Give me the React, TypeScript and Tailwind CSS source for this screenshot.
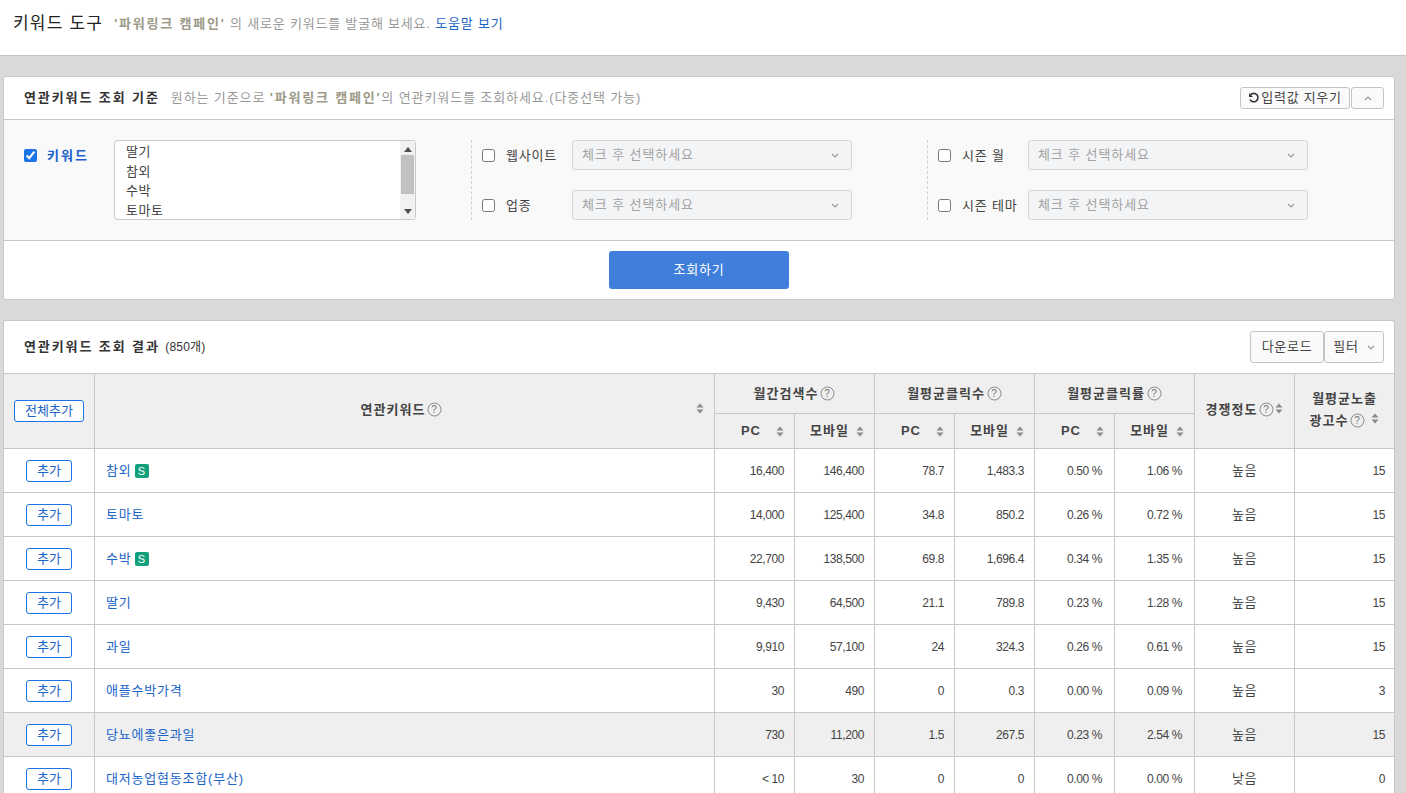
import React from "react";

const font = "font-['Liberation_Sans','Noto_Sans_CJK_KR',sans-serif]";

const rows = [
  { name: "참외", s: true, v: ["16,400", "146,400", "78.7", "1,483.3", "0.50 %", "1.06 %", "높음", "15"] },
  { name: "토마토", v: ["14,000", "125,400", "34.8", "850.2", "0.26 %", "0.72 %", "높음", "15"] },
  { name: "수박", s: true, v: ["22,700", "138,500", "69.8", "1,696.4", "0.34 %", "1.35 %", "높음", "15"] },
  { name: "딸기", v: ["9,430", "64,500", "21.1", "789.8", "0.23 %", "1.28 %", "높음", "15"] },
  { name: "과일", v: ["9,910", "57,100", "24", "324.3", "0.26 %", "0.61 %", "높음", "15"] },
  { name: "애플수박가격", v: ["30", "490", "0", "0.3", "0.00 %", "0.09 %", "높음", "3"] },
  { name: "당뇨에좋은과일", hover: true, v: ["730", "11,200", "1.5", "267.5", "0.23 %", "2.54 %", "높음", "15"] },
  { name: "대저농업협동조합(부산)", v: ["< 10", "30", "0", "0", "0.00 %", "0.00 %", "낮음", "0"] },
];

const Sort = ({ className = "" }: { className?: string }) => (
  <svg width="8" height="11" viewBox="0 0 8 11" className={`shrink-0 ${className}`}>
    <path d="M4 0.5L7.5 4.5H0.5z" fill="#8a8a8a" />
    <path d="M4 10.5L7.5 6.5H0.5z" fill="#8a8a8a" />
  </svg>
);

const Help = () => (
  <svg width="15" height="15" viewBox="0 0 15 15" className="ml-[2px] inline-block shrink-0 align-[-3px]">
    <circle cx="7.5" cy="7.5" r="6.5" fill="none" stroke="#8c8c8c" />
    <text x="7.5" y="11" textAnchor="middle" fontSize="10" fontWeight="400" fill="#777">?</text>
  </svg>
);

const Chevron = ({ up }: { up?: boolean }) => (
  <svg width="8" height="5" viewBox="0 0 8 5">
    <path d={up ? "M1 4l3-3 3 3" : "M1 1l3 3 3-3"} fill="none" stroke="#999" strokeWidth="1.2" />
  </svg>
);

const Select = () => (
  <div className="flex h-[30px] w-[280px] items-center justify-between rounded-[3px] border border-[#d5d7da] bg-[#f3f4f6] pl-[9px] pr-[12px] text-[13px] tracking-[0.9px] text-[#a3a3a3]">
    <span>체크 후 선택하세요</span>
    <Chevron />
  </div>
);

const Check = ({ on }: { on?: boolean }) => (
  <input type="checkbox" defaultChecked={on} className="m-0 h-[13px] w-[13px] shrink-0 accent-[#1a73e8]" />
);

const Field = ({ label }: { label: string }) => (
  <div className="flex h-[30px] items-center">
    <Check />
    <span className="ml-[11px] w-[66px] pt-[1px] text-[13px] tracking-[0.8px] text-[#444]">{label}</span>
    <Select />
  </div>
);

const Btn = ({ children, className = "" }: { children: React.ReactNode; className?: string }) => (
  <button className={`flex items-center justify-center rounded-[3px] border border-[#c4c4c4] bg-[#fafafa] text-[13px] tracking-[0.7px] text-[#444] ${className}`}>
    {children}
  </button>
);

const AddBtn = ({ children, className = "" }: { children: React.ReactNode; className?: string }) => (
  <button className={`mx-auto flex h-[22px] items-center justify-center rounded-[3px] border border-[#1a73e8] bg-white text-[13px] font-normal tracking-normal text-[#1b64c8] ${className}`}>
    {children}
  </button>
);

const th = "border-b border-r border-[#c8c8c8] bg-[#efefef] p-0 text-center text-[13px] font-bold tracking-[1px] text-[#444]";
const td = "border-b border-r border-[#c8c8c8] text-right text-[12px] tracking-[-0.4px] text-[#444]";

const SubHead = ({ label, wide }: { label: string; wide?: boolean }) => (
  <th className={`${th} h-[35px]`}>
    <div className="flex items-center justify-end pr-[10px]">
      <span className={wide ? "mr-[7px]" : "mr-[15px]"}>{label}</span>
      <Sort />
    </div>
  </th>
);

const GroupHead = ({ label }: { label: string }) => (
  <th colSpan={2} className={`${th} h-[40px]`}>
    {label}
    <Help />
  </th>
);

export default function App() {
  return (
    <div className={`${font} h-[793px] w-[1406px] overflow-hidden bg-[#d9d9d9]`}>
      <header className="flex h-[56px] items-start border-b border-[#c4c4c4] bg-white pl-[13px] pt-[12px]">
        <h1 className="text-[17px] font-normal leading-[24px] tracking-[1.2px] text-[#222]">키워드 도구</h1>
        <p className="ml-[11px] pt-[3px] text-[13px] leading-[18px] tracking-[0.8px] text-[#999]">
          <b className="tracking-[1.8px] text-[#9c9a87]">'파워링크 캠페인'</b> 의 새로운 키워드를 발굴해 보세요.{" "}
          <a className="text-[#1b64c8]">도움말 보기</a>
        </p>
      </header>

      <section className="ml-[3px] mt-[20px] w-[1392px] rounded-[3px] border border-[#c8c8c8] bg-white">
        <div className="flex h-[43px] items-center justify-between border-b border-[#c8c8c8] pl-[20px] pr-[10px]">
          <div className="flex items-center">
            <h2 className="text-[13px] font-bold tracking-[1.9px] text-[#333]">연관키워드 조회 기준</h2>
            <p className="ml-[11px] text-[13px] tracking-[0.9px] text-[#999]">
              원하는 기준으로 <b className="tracking-[1.8px] text-[#9c9a87]">'파워링크 캠페인'</b>의 연관키워드를 조회하세요.(다중선택 가능)
            </p>
          </div>
          <div className="flex gap-[1px]">
            <Btn className="h-[22px] w-[110px]">
              <svg width="12" height="12" viewBox="0 0 12 12" className="mr-[1px]">
                <path d="M2.6 2.8A4.2 4.2 0 1 1 2 7.5" fill="none" stroke="#333" strokeWidth="1.6" />
                <path d="M1 1v4h4z" fill="#333" />
              </svg>
              입력값 지우기
            </Btn>
            <Btn className="h-[22px] w-[33px]">
              <Chevron up />
            </Btn>
          </div>
        </div>

        <div className="flex h-[121px] border-b border-[#c8c8c8] bg-[#f9f9f9] pl-[20px] pt-[20px]">
          <div className="flex h-[30px] w-[90px] items-center">
            <Check on />
            <span className="ml-[10px] pt-[1px] text-[13px] font-bold tracking-[2px] text-[#1a5fd0]">키워드</span>
          </div>
          <div className="flex h-[80px] w-[302px] overflow-hidden rounded-[3px] border border-[#c8c8c8] bg-white">
            <ul className="flex-1 pl-[11px] pt-[1px] text-[13px] leading-[19.5px] tracking-[0.5px] text-[#444]">
              <li>딸기</li>
              <li>참외</li>
              <li>수박</li>
              <li>토마토</li>
            </ul>
            <div className="flex w-[15px] flex-col items-center bg-[#f1f1f1] pb-[5px] pt-[6px]">
              <svg width="8" height="5" viewBox="0 0 8 5"><path d="M4 0l4 5H0z" fill="#505050" /></svg>
              <div className="mt-[3px] h-[39px] w-[13px] bg-[#c1c1c1]" />
              <svg width="8" height="5" viewBox="0 0 8 5" className="mt-auto"><path d="M4 5l4-5H0z" fill="#505050" /></svg>
            </div>
          </div>
          <div className="ml-[55px] flex h-[80px] w-[456px] flex-col justify-between border-l border-dashed border-[#d0d0d0] pl-[10px]">
            <Field label="웹사이트" />
            <Field label="업종" />
          </div>
          <div className="flex h-[80px] flex-col justify-between border-l border-dashed border-[#d0d0d0] pl-[10px]">
            <Field label="시즌 월" />
            <Field label="시즌 테마" />
          </div>
        </div>

        <div className="flex h-[58px] items-center justify-center">
          <button className="h-[38px] w-[180px] rounded-[3px] bg-[#3f7fdb] text-[13px] tracking-[0.8px] text-white">조회하기</button>
        </div>
      </section>

      <section className="ml-[3px] mt-[20px] w-[1392px] rounded-t-[3px] border-x border-t border-[#c8c8c8] bg-white">
        <div className="flex h-[52px] items-center justify-between pl-[20px] pr-[10px]">
          <h2 className="text-[13px] font-bold tracking-[1.9px] text-[#333]">
            연관키워드 조회 결과 <span className="text-[12px] font-normal tracking-[0.2px]">(850개)</span>
          </h2>
          <div className="flex">
            <Btn className="h-[32px] w-[74px]">다운로드</Btn>
            <Btn className="h-[32px] w-[60px] gap-[8px]">필터 <Chevron /></Btn>
          </div>
        </div>

        <table className="w-[1390px] table-fixed border-separate border-spacing-0 border-t border-[#c8c8c8]">
          <colgroup>
            <col className="w-[91px]" />
            <col className="w-[620px]" />
            <col className="w-[80px]" />
            <col className="w-[80px]" />
            <col className="w-[80px]" />
            <col className="w-[80px]" />
            <col className="w-[80px]" />
            <col className="w-[80px]" />
            <col className="w-[100px]" />
            <col className="w-[99px]" />
          </colgroup>
          <thead>
            <tr>
              <th rowSpan={2} className={th}>
                <AddBtn className="w-[70px]">전체추가</AddBtn>
              </th>
              <th rowSpan={2} className={`${th} relative pb-[2px] pr-[6px]`}>
                연관키워드
                <Help />
                <Sort className="absolute right-[10px] top-[29px]" />
              </th>
              <GroupHead label="월간검색수" />
              <GroupHead label="월평균클릭수" />
              <GroupHead label="월평균클릭률" />
              <th rowSpan={2} className={`${th} pb-[3px]`}>
                <div className="flex items-center justify-center">
                  경쟁정도
                  <Help />
                  <Sort className="-mt-[2px] ml-[1px]" />
                </div>
              </th>
              <th rowSpan={2} className={`${th} border-r-0 pb-[3px] leading-[22px]`}>
                월평균노출
                <br />
                <span className="inline-flex items-center gap-[6px]">
                  <span>광고수<Help /></span>
                  <Sort className="-mt-[4px]" />
                </span>
              </th>
            </tr>
            <tr>
              <SubHead label="PC" />
              <SubHead label="모바일" wide />
              <SubHead label="PC" />
              <SubHead label="모바일" wide />
              <SubHead label="PC" />
              <SubHead label="모바일" wide />
            </tr>
          </thead>
          <tbody>
            {rows.map((r) => (
              <tr key={r.name} className={`h-[44px] ${r.hover ? "bg-[#efefef]" : "bg-white"}`}>
                <td className="border-b border-r border-[#c8c8c8] text-center">
                  <AddBtn className="w-[46px]">추가</AddBtn>
                </td>
                <td className="border-b border-r border-[#c8c8c8] pl-[11px] text-[13px] tracking-[0.8px] text-[#1b64c8]">
                  <span className="inline-flex items-center gap-[3px] pt-[1px]">
                    {r.name}
                    {r.s && (
                      <span className="flex h-[14px] w-[14px] items-center justify-center rounded-[2px] bg-[#12a17c] text-[11px] tracking-normal text-white">S</span>
                    )}
                  </span>
                </td>
                {r.v.map((c, i) => (
                  <td
                    key={i}
                    className={
                      i === 6
                        ? "border-b border-r border-[#c8c8c8] text-center text-[13px] tracking-[0.5px] text-[#444]"
                        : i === 7
                          ? `${td} border-r-0 pr-[9px]`
                          : i === 4 || i === 5
                            ? `${td} pr-[12px]`
                            : `${td} pr-[10px]`
                    }
                  >
                    {c}
                  </td>
                ))}
              </tr>
            ))}
          </tbody>
        </table>
      </section>
    </div>
  );
}
